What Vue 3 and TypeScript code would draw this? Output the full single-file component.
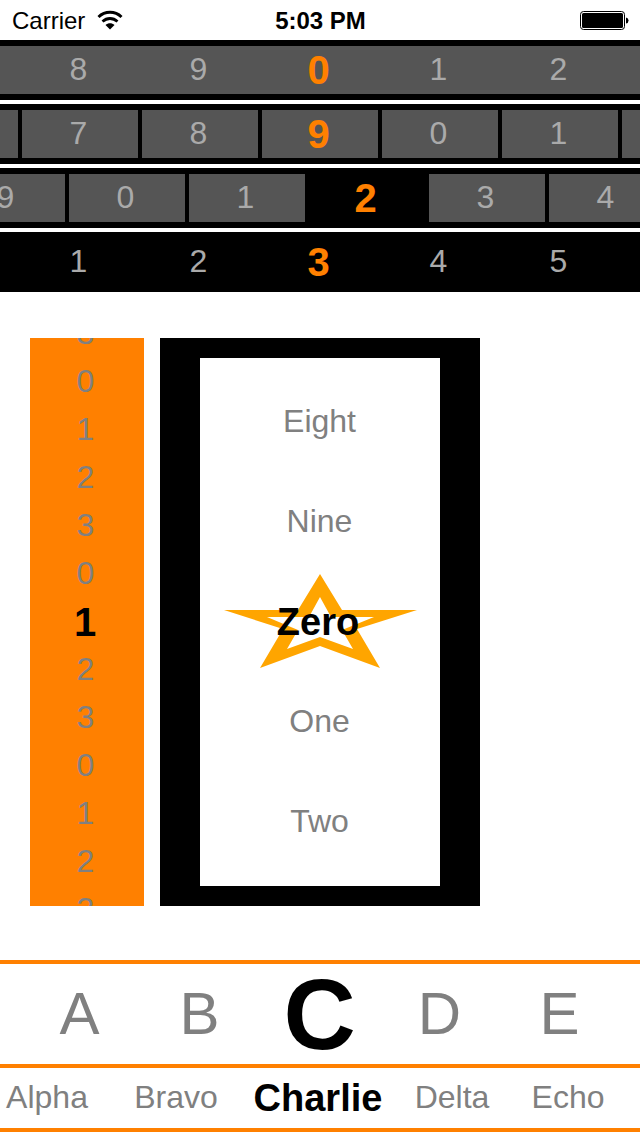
<script setup lang="ts">
import { ref } from 'vue'

interface Strip {
  label: string
  kind: string
  items: string[]
  selected: number
  shift: number
}

const strips = ref<Strip[]>([
  { label: 'First digit', kind: 'band', items: ['8', '9', '0', '1', '2'], selected: 2, shift: 0 },
  { label: 'Second digit', kind: 'cells endless', items: ['7', '8', '9', '0', '1'], selected: 2, shift: 0 },
  { label: 'Third digit', kind: 'cells dark', items: ['9', '0', '1', '2', '3', '4'], selected: 3, shift: 47 },
  { label: 'Fourth digit', kind: 'plain', items: ['1', '2', '3', '4', '5'], selected: 2, shift: 0 },
])

const wheel = ['3', '0', '1', '2', '3', '0', '1', '2', '3', '0', '1', '2', '3']
const wheelSelected = ref(6)

const names = ['Eight', 'Nine', 'Zero', 'One', 'Two']
const nameSelected = ref(2)

const letters = ['A', 'B', 'C', 'D', 'E']
const letterSelected = ref(2)

const words = ['Alpha', 'Bravo', 'Charlie', 'Delta', 'Echo']
const wordSelected = ref(2)
</script>

<template>
  <div class="page">
    <header class="status">
      <div class="carrier">
        <span class="status-text">Carrier</span>
        <svg class="wifi" viewBox="0 0 26 20" aria-hidden="true">
          <path d="M1.500 7C8 .8 18 .8 24.500 7" fill="none" stroke="#000" stroke-width="3" />
          <path d="M5.500 11.500C10 7.500 16 7.500 20.500 11.500" fill="none" stroke="#000" stroke-width="2.800" />
          <path d="M8.500 15C11 12.500 15 12.500 17.500 15L13 19.500Z" fill="#000" />
        </svg>
      </div>
      <time class="clock status-text">5:03 PM</time>
      <svg class="battery" viewBox="0 0 50 20" aria-hidden="true">
        <rect x="1.500" y="1.500" width="44" height="18" rx="3" fill="#fff" stroke="#000" />
        <rect x="3" y="3" width="41" height="15" rx="1.500" fill="#000" />
        <path d="M47 7.500Q49.500 8 49.500 10.500T47 13.500Z" fill="#000" />
      </svg>
    </header>

    <section class="strips">
      <div v-for="strip in strips" :key="strip.label" class="strip" :class="strip.kind" role="listbox" :aria-label="strip.label">
        <div class="track" :style="{ marginLeft: strip.shift * 2 + 'px' }">
          <button
            v-for="(item, i) in strip.items"
            :key="i"
            type="button"
            role="option"
            class="digit"
            :class="{ selected: i === strip.selected }"
            :aria-selected="i === strip.selected"
            @click="strip.selected = i"
          >{{ item }}</button>
        </div>
      </div>
    </section>

    <main class="stage">
      <div class="wheel" role="listbox" aria-label="Number">
        <button
          v-for="(item, i) in wheel"
          :key="i"
          type="button"
          role="option"
          class="notch"
          :class="{ selected: i === wheelSelected }"
          :aria-selected="i === wheelSelected"
          @click="wheelSelected = i"
        >{{ item }}</button>
      </div>
      <div class="frame">
        <div class="names" role="listbox" aria-label="Number name">
          <button
            v-for="(item, i) in names"
            :key="item"
            type="button"
            role="option"
            class="name"
            :class="{ selected: i === nameSelected }"
            :aria-selected="i === nameSelected"
            @click="nameSelected = i"
          >
            <svg v-if="i === nameSelected" class="star" viewBox="0 0 240 100" aria-hidden="true">
              <path
                fill="#ffa500"
                fill-rule="evenodd"
                d="M120 2L142 38H217L157 57L180 96L120 74L60 96L83 57L24 38H98ZM120 25L109 45H67L98 58L87 77L120 65L153 77L142 58L174 45H131Z"
              />
            </svg>
            <span class="caption">{{ item }}</span>
          </button>
        </div>
      </div>
    </main>

    <footer class="alphabet">
      <div class="letters" role="listbox" aria-label="Letter">
        <button
          v-for="(item, i) in letters"
          :key="item"
          type="button"
          role="option"
          class="letter"
          :class="{ selected: i === letterSelected }"
          :aria-selected="i === letterSelected"
          @click="letterSelected = i"
        >{{ item }}</button>
      </div>
      <div class="words" role="listbox" aria-label="Code word">
        <button
          v-for="(item, i) in words"
          :key="item"
          type="button"
          role="option"
          class="word"
          :class="{ selected: i === wordSelected }"
          :aria-selected="i === wordSelected"
          @click="wordSelected = i"
        >{{ item }}</button>
      </div>
    </footer>
  </div>
</template>

<style>
body {
  background: #fff;
}
</style>

<style scoped>
.page {
  font-family: "Liberation Sans", Arial, sans-serif;
  color: #000;
  overflow: hidden;
}

button {
  border: 0;
  margin: 0;
  padding: 0;
  background: none;
  font: inherit;
  font-size: 32px;
  line-height: 40px;
  color: #808080;
  white-space: nowrap;
  cursor: pointer;
}

button.selected {
  font-size: 40px;
  font-weight: bold;
  color: #000;
}

.status {
  display: grid;
  grid-template-columns: 1fr auto 1fr;
  align-items: center;
  height: 40px;
  padding: 0 11px 0 12px;
  font-size: 24px;
  line-height: 28px;
}

.status-text {
  padding-top: 2px;
}

.carrier {
  display: flex;
  align-items: center;
  gap: 12px;
}

.wifi {
  width: 26px;
  height: 20px;
}

.clock {
  font-weight: bold;
}

.battery {
  justify-self: end;
  width: 50px;
  height: 20px;
}

.strips {
  display: grid;
  gap: 4px;
}

.strip {
  display: flex;
  justify-content: center;
  overflow: hidden;
  padding: 6px 0;
  background: #000;
}

.track {
  display: flex;
  flex: none;
  justify-content: center;
}

.band .track {
  width: 100%;
  background: #555;
}

.digit,
.endless .track::before,
.cells .track::after {
  width: 120px;
  height: 48px;
}

.digit {
  padding: 0 3px 2px 0;
  color: #aaa;
}

/* Blank cells that run off the ends of a strip */
.endless .track::before,
.cells .track::after {
  content: "";
}

.cells .digit,
.endless .track::before,
.cells .track::after {
  width: 116px;
  margin: 0 2px;
  background: #555;
}

.digit.selected {
  padding-bottom: 0;
  color: #ff8000;
}

.dark .digit.selected {
  background: #000;
}

.stage {
  display: flex;
  gap: 16px;
  padding: 46px 30px 54px;
}

.wheel {
  display: flex;
  flex-direction: column;
  justify-content: center;
  width: 114px;
  height: 568px;
  overflow: hidden;
  background: #ff8000;
}

.notch {
  flex: none;
  height: 48px;
  padding: 0 3px 2px 0;
}

.frame {
  width: 240px;
  padding: 20px 40px;
  background: #000;
}

.names {
  display: grid;
  padding: 14px 0;
  background: #fff;
}

.name {
  position: relative;
  height: 100px;
  padding: 0 1px 2px 0;
}

.star {
  position: absolute;
  inset: 0;
  width: 100%;
  height: 100%;
}

.caption {
  position: relative;
}

.notch.selected,
.name.selected {
  padding: 0 4px 0 0;
}

.name.selected,
.word.selected {
  font-size: 38px;
}

.letters,
.words {
  display: grid;
  border-top: 4px solid #ff8000;
}

.letters {
  grid-template-columns: 20fr repeat(5, 120fr) 20fr;
}

.letter {
  height: 100px;
  padding-right: 1px;
  font-size: 60px;
}

.letter:first-child {
  grid-column: 2;
}

.letter.selected {
  font-size: 100px;
  line-height: 100px;
}

.words {
  grid-template-columns: 112fr 128fr 156fr 112fr 120fr 12fr;
  border-bottom: 4px solid #ff8000;
}

.word {
  height: 60px;
  padding-bottom: 2px;
}

.word:first-child {
  padding-right: 18px;
}

.word.selected {
  padding-bottom: 0;
}
</style>
